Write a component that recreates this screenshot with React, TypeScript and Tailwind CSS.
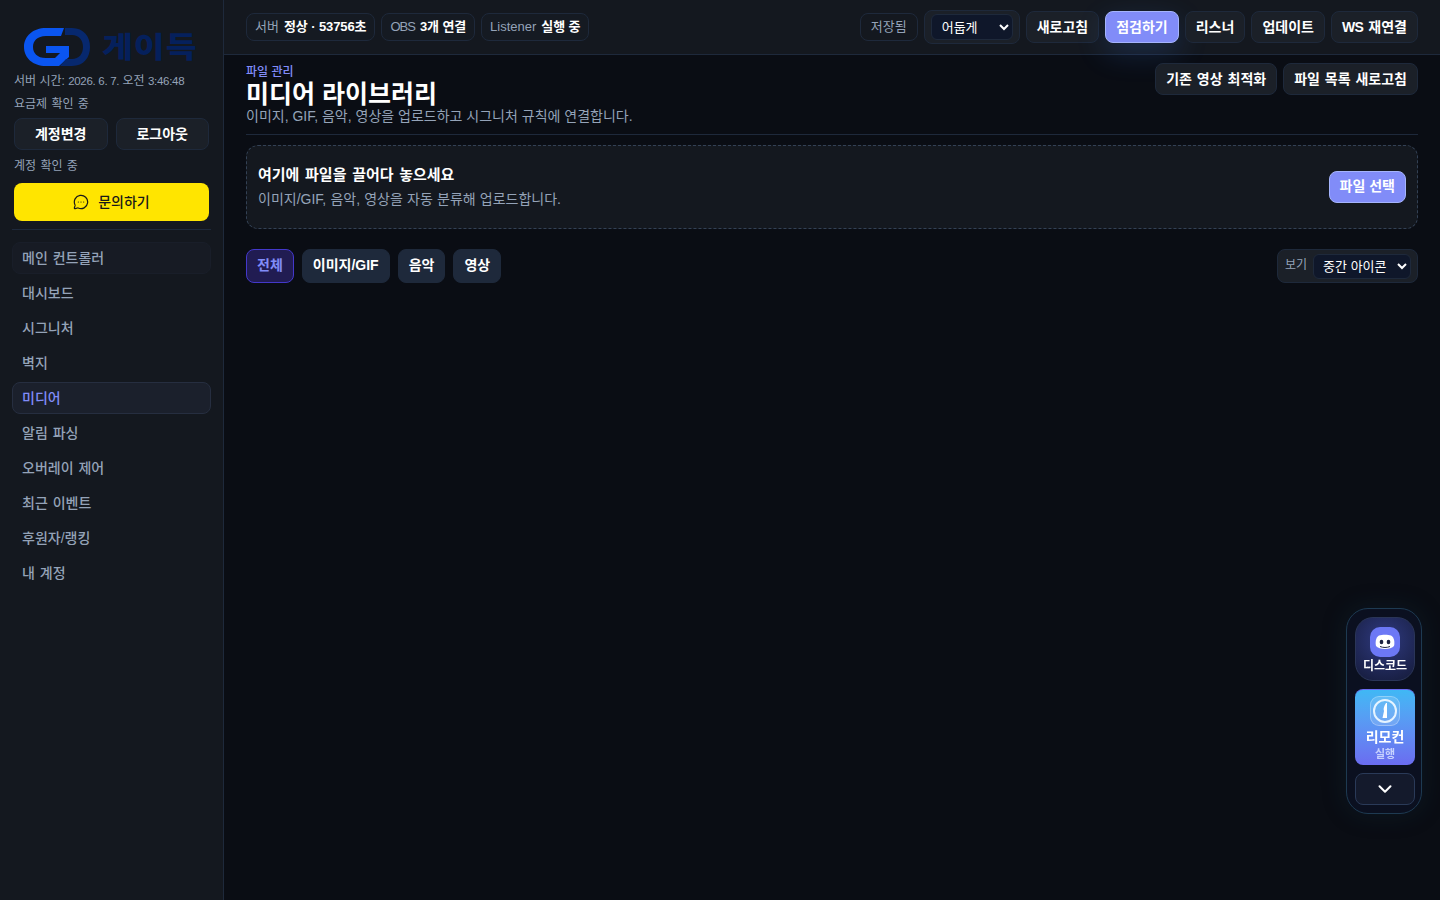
import { ChevronDown, MessageCircleMore } from 'lucide-react';

const NAV = ['메인 컨트롤러', '대시보드', '시그니처', '벽지', '미디어', '알림 파싱', '오버레이 제어', '최근 이벤트', '후원자/랭킹', '내 계정'];

function Logo() {
  return (
    <div className="flex h-[40px] items-center pl-[12px]">
      <svg width="68" height="40" viewBox="0 0 68 40" fill="none" className="shrink-0">
        <path d="M40 1 H22 C9 1 0 9 0 20 C0 31 9 39 22 39 H35 L45 30 V19 H22 V26 H37 V25 L31 31 H22 C13 31 9 26 9 20 C9 14 13 9 22 9 H37 Z" fill="#0a55f0" />
        <path d="M41 1 H48 C60 1 66 10 66 20 C66 30 60 39 48 39 H36 L42 32 H48 C55 32 59 27 59 20 C59 13 55 8 48 8 H41 Z" fill="#07286e" />
      </svg>
      <span className="mt-[1px] ml-[10px] inline-block origin-left scale-x-[1.15] text-[29px] leading-[40px] font-black tracking-[1px] whitespace-nowrap text-[#05205c]">게이득</span>
    </div>
  );
}

function Chip({ label, value, tight }: { label: string; value: string; tight?: boolean }) {
  return (
    <div className="flex h-[28px] items-center gap-[5px] rounded-lg border border-[#1e293b] bg-[#151a22] px-2 text-[13px] [word-spacing:0]">
      <span className={tight ? 'tracking-[-1px] text-[#94a3b8]' : 'text-[#94a3b8]'}>{label}</span>
      <strong className="font-bold tracking-[-0.1px] text-white">{value}</strong>
    </div>
  );
}

function TopButton({ children, active }: { children: React.ReactNode; active?: boolean }) {
  return (
    <button
      type="button"
      className={`h-8 rounded-lg border px-[10px] text-[14px] font-bold [word-spacing:1px] ${
        active
          ? 'border-[#a5b4fc] bg-[#818cf8] text-white shadow-[0_10px_30px_rgba(59,130,246,0.2)]'
          : 'border-[#1e293b] bg-[#1b2028] text-white'
      }`}
    >
      {children}
    </button>
  );
}

function Tab({ children, active }: { children: React.ReactNode; active?: boolean }) {
  return (
    <button
      type="button"
      className={`h-[34px] rounded-lg border px-[10px] pb-[2px] text-[14px] font-bold ${
        active ? 'border-[#4338ca] bg-[#211c52] text-[#818cf8]' : 'border-[#1e293b] bg-[#1e293b] text-white'
      }`}
    >
      {children}
    </button>
  );
}

export default function App() {
  return (
    <div className="flex h-[900px] w-[1440px] overflow-hidden bg-[#0a0d14] font-['Liberation_Sans','Noto_Sans_CJK_KR',sans-serif] [word-spacing:1px]">
      <aside className="flex w-[224px] shrink-0 flex-col border-r border-[#1e293b] bg-[#14181f] px-3 pt-[27px]">
        <Logo />
        <div className="mt-[6px] pl-[2px] text-[12px] leading-[16px] text-[#94a3b8] [word-spacing:0]">
          서버 시간: <span className="text-[11.5px] tracking-[-0.3px]">2026. 6. 7.</span> 오전 <span className="text-[11.5px] tracking-[-0.3px]">3:46:48</span>
        </div>
        <div className="mt-[7px] pl-[2px] text-[12px] leading-[16px] text-[#94a3b8]">요금제 확인 중</div>
        <div className="mt-[6px] flex gap-2 px-[2px]">
          <button type="button" className="h-8 flex-1 rounded-lg border border-[#1e293b] bg-[#1b2028] text-[14px] font-bold text-white">계정변경</button>
          <button type="button" className="h-8 flex-1 rounded-lg border border-[#1e293b] bg-[#1b2028] text-[14px] font-bold text-white">로그아웃</button>
        </div>
        <div className="mt-2 pl-[2px] text-[12px] leading-[16px] text-[#94a3b8]">계정 확인 중</div>
        <div className="mx-[2px] mt-[9px] flex h-[38px] items-center justify-center gap-[9px] rounded-lg bg-[#ffe500] text-[14px] font-medium text-[#191919]">
          <MessageCircleMore size={16} strokeWidth={1.8} />
          문의하기
        </div>
        <div className="mt-[8px] border-t border-[#1e293b]" />
        <nav className="mt-[12px] flex flex-col gap-[3px]">
          {NAV.map((item, i) => (
            <div
              key={item}
              className={`flex h-8 items-center rounded-lg border px-[9px] text-[14px] font-medium ${
                item === '미디어'
                  ? 'border-[#262e40] bg-[#1b202c] text-[#818cf8]'
                  : i === 0
                    ? 'border-[#191e29] bg-[#171b24] text-[#94a3b8]'
                    : 'border-transparent text-[#94a3b8]'
              }`}
            >
              {item}
            </div>
          ))}
        </nav>
      </aside>

      <div className="flex min-w-0 flex-1 flex-col">
        <header className="flex h-[55px] shrink-0 items-center justify-between border-b border-[#1e293b] bg-[#14181f] px-[22px]">
          <div className="flex gap-[6px]">
            <Chip label="서버" value="정상 · 53756초" />
            <Chip label="OBS" value="3개 연결" tight />
            <Chip label="Listener" value="실행 중" />
          </div>
          <div className="flex items-center gap-[6px]">
            <div className="flex h-[28px] items-center rounded-lg border border-[#1e293b] px-[10px] text-[13px] text-[#94a3b8]">저장됨</div>
            <div className="flex h-[34px] w-[96px] items-center rounded-lg border border-[#1e293b] bg-[#1b2028] px-[6px]">
              <select className="h-[26px] w-full rounded-md border border-[#1e293b] bg-[#0f172a] pl-[6px] text-[13px] text-white outline-none">
                <option>어둡게</option>
              </select>
            </div>
            <TopButton>새로고침</TopButton>
            <TopButton active>점검하기</TopButton>
            <TopButton>리스너</TopButton>
            <TopButton>업데이트</TopButton>
            <TopButton>
              <span className="tracking-[-0.5px]">WS</span> 재연결
            </TopButton>
          </div>
        </header>

        <main className="flex-1 px-[22px] pt-[9px]">
          <div className="flex items-start justify-between border-b border-[#1e293b] pb-[9px]">
            <div className="[word-spacing:0]">
              <div className="text-[12px] leading-[16px] font-medium text-[#818cf8]">파일 관리</div>
              <h1 className="text-[25px] leading-[28px] font-bold text-white">미디어 라이브러리</h1>
              <p className="text-[14px] leading-[17px] text-[#94a3b8]">이미지, GIF, 음악, 영상을 업로드하고 시그니처 규칙에 연결합니다.</p>
            </div>
            <div className="-mt-[1px] flex gap-[6px]">
              <TopButton>기존 영상 최적화</TopButton>
              <TopButton>파일 목록 새로고침</TopButton>
            </div>
          </div>

          <section className="mt-[10px] flex h-[84px] items-center justify-between rounded-xl border border-dashed border-[#334155] bg-[#14181f] px-[11px]">
            <div className="-mt-[1px]">
              <div className="text-[15px] leading-[20px] font-bold text-white [word-spacing:1.5px]">여기에 파일을 끌어다 놓으세요</div>
              <div className="mt-1 text-[14px] leading-[20px] text-[#94a3b8] [word-spacing:0.3px]">이미지/GIF, 음악, 영상을 자동 분류해 업로드합니다.</div>
            </div>
            <button type="button" className="h-8 rounded-lg border border-[#a5b4fc] bg-[#818cf8] px-[10px] pb-[2px] text-[14px] font-bold text-white">파일 선택</button>
          </section>

          <div className="mt-5 flex items-center justify-between">
            <div className="flex gap-2">
              <Tab active>전체</Tab>
              <Tab>이미지/GIF</Tab>
              <Tab>음악</Tab>
              <Tab>영상</Tab>
            </div>
            <div className="flex h-[34px] w-[141px] items-center gap-[6px] rounded-lg border border-[#1e293b] bg-[#1b2028] pl-[7px] pr-[6px]">
              <span className="-mt-[3px] text-[12px] text-[#94a3b8]">보기</span>
              <select className="h-[25px] min-w-0 flex-1 rounded-md border border-[#1e293b] bg-[#0f172a] pl-[5px] text-[13px] text-white outline-none">
                <option>중간 아이콘</option>
              </select>
            </div>
          </div>
        </main>
      </div>

      <div className="fixed top-[608px] left-[1346px] flex h-[206px] w-[76px] flex-col items-center gap-2 rounded-[22px] border border-[#1e3a52] bg-[#0b1020] pt-2 pl-[2px] shadow-[0_0_24px_rgba(20,60,80,0.25)]">
        <div className="flex h-[64px] w-[60px] flex-col items-center rounded-[18px] border border-[#2a3558] bg-[radial-gradient(circle_at_50%_35%,#2f3a80,#151b3a)] pt-[9px]">
          <div className="flex h-[30px] w-[30px] items-center justify-center rounded-[10px] bg-[#6c78f5]">
            <svg width="22" height="17" viewBox="0 0 22 17">
              <path d="M5 1.500 C8 0.500 14 0.500 17 1.500 C20 3 21 8 20 12 C17 16 5 16 2 12 C1 8 2 3 5 1.500 Z" fill="#fff" />
              <ellipse cx="7.500" cy="8" rx="1.800" ry="2.200" fill="#1a2142" />
              <ellipse cx="14.500" cy="8" rx="1.800" ry="2.200" fill="#1a2142" />
              <path d="M6 12.500 C9 13.800 13 13.800 16 12.500" fill="none" stroke="#1a2142" strokeWidth="1" />
            </svg>
          </div>
          <span className="mt-[2px] text-[12px] leading-[15px] font-bold text-white">디스코드</span>
        </div>
        <div className="flex h-[76px] w-[60px] flex-col items-center rounded-lg border-t border-[#6a6cf0] bg-gradient-to-b from-[#3fb8f5] to-[#6a6cf0] pt-[6px]">
          <div className="flex h-[30px] w-[30px] items-center justify-center rounded-[9px] border border-white/30 bg-white/15">
            <svg width="26" height="26" viewBox="0 0 26 26">
              <circle cx="13" cy="13" r="11" fill="none" stroke="#e6f4ff" strokeWidth="2" />
              <path d="M14 5 C12 8 11 11 12 13 L10.500 20 H15 V5 Z" fill="#fff" />
            </svg>
          </div>
          <span className="mt-[2px] text-[14px] leading-[18px] font-bold text-white">리모컨</span>
          <span className="mt-[1px] text-[11px] leading-[15px] font-bold text-[#c7d2fe]">실행</span>
        </div>
        <div className="flex h-8 w-[60px] items-center justify-center rounded-lg border border-[#2a3a58] bg-[#141a2c] text-white">
          <ChevronDown size={22} strokeWidth={2.2} />
        </div>
      </div>
    </div>
  );
}
